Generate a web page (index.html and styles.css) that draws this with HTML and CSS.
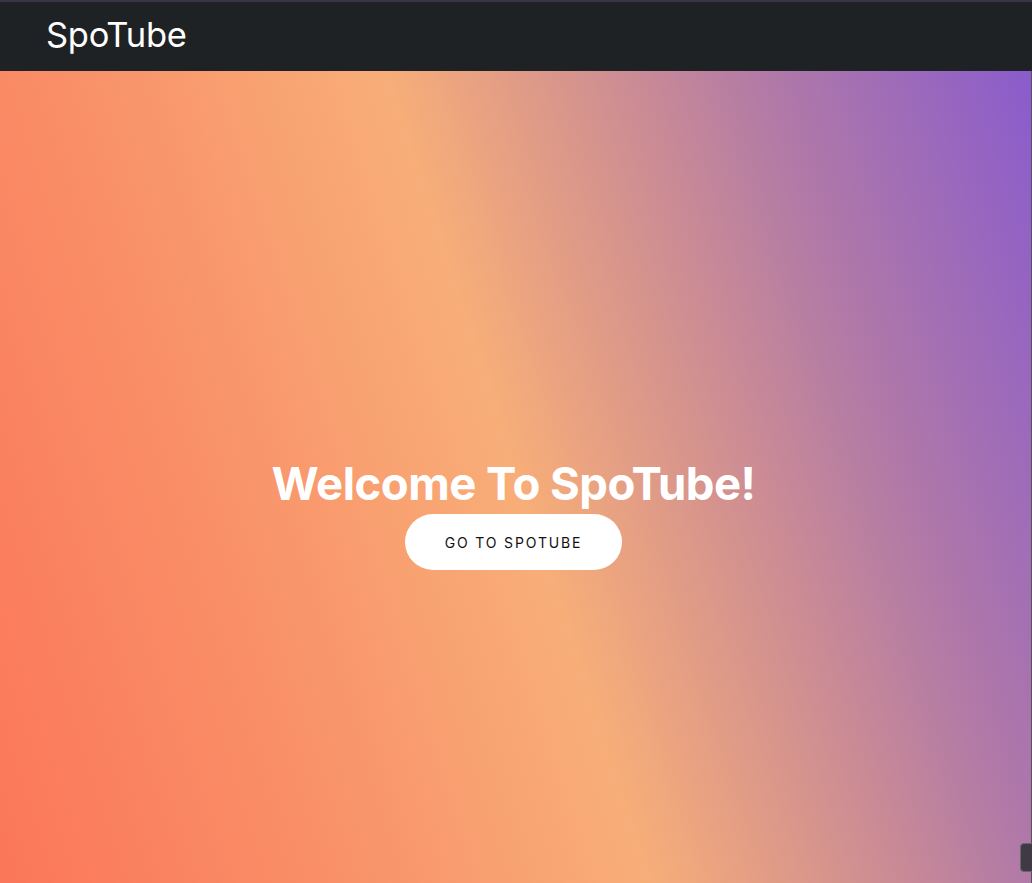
FILE: index.html
```html
<!DOCTYPE html>
<html lang="en">
<head>
<meta charset="utf-8">
<title>SpoTube</title>
<link rel="stylesheet" href="styles.css">
</head>
<body>
<header class="topbar">
  <div class="brand">SpoTube</div>
</header>
<main class="hero">
  <h1 class="hero-title">Welcome To SpoTube!</h1>
  <a class="hero-btn" href="#">GO TO SPOTUBE</a>
</main>
<div class="scroll-thumb"></div>
</body>
</html>
```

FILE: styles.css
```css
html, body {
  margin: 0;
  padding: 0;
}
body {
  font-family: Inter, "Liberation Sans", sans-serif;
  overflow: hidden;
  height: 883px;
  background: #1f2225;
}
.topbar {
  height: 69px;
  background: #1f2225;
  border-top: 2px solid #3a3546;
  display: flex;
  align-items: center;
  padding-left: 46px;
}
.brand {
  color: #ffffff;
  font-size: 34.5px;
  font-weight: 400;
  letter-spacing: -0.3px;
  margin-top: -5px;
}
.hero {
  box-sizing: border-box;
  height: 812px;
  padding-top: 74px;
  display: flex;
  flex-direction: column;
  align-items: center;
  justify-content: center;
  background: linear-gradient(72deg, #fb765a 0%, #f99068 26%, #f8ae78 50%, #d7948c 64%, #b27aa6 79%, #8a5ccc 100%);
  border-right: 1px solid #555;
}
.hero-title {
  margin: 0 4px 0 0;
  color: #ffffff;
  font-size: 45.5px;
  font-weight: 700;
  letter-spacing: -0.5px;
  line-height: 52px;
}
.hero-btn {
  display: inline-flex;
  align-items: center;
  justify-content: center;
  width: 217px;
  height: 56px;
  border-radius: 28px;
  background: #ffffff;
  color: #111111;
  font-size: 14px;
  letter-spacing: 1.85px;
  text-decoration: none;
  margin-top: 4px;
  margin-left: -4px;
}
.scroll-thumb {
  position: absolute;
  right: -4px;
  top: 843px;
  width: 14px;
  height: 27px;
  border-radius: 4px;
  background: #3f3a44;
  border: 1px solid #6a6470;
}
```
